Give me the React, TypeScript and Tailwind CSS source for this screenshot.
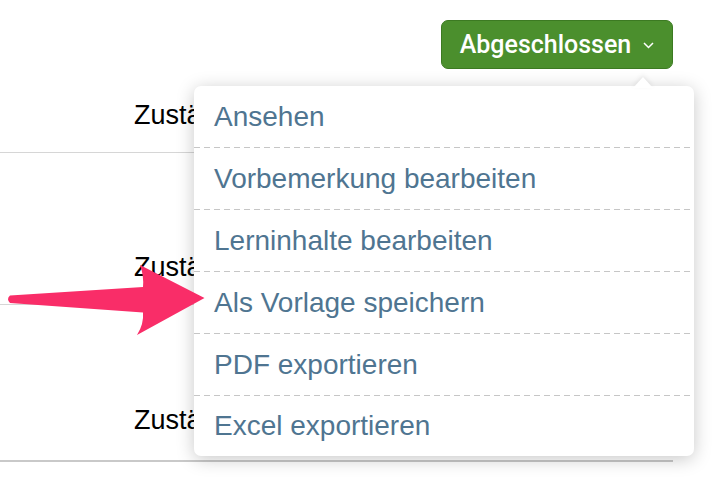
import { FC } from "react";

const items = [
    "Ansehen",
    "Vorbemerkung bearbeiten",
    "Lerninhalte bearbeiten",
    "Als Vorlage speichern",
    "PDF exportieren",
    "Excel exportieren",
];

const App: FC = () => {
    return (
        <div className="relative w-[724px] h-[480px] overflow-hidden bg-white font-['Liberation_Sans',Arial,sans-serif]">
            {/* Table rows behind the menu */}
            <div className="w-[673px]">
                <div className="h-[153px] pt-[100px] pl-[134px] border-b border-[#d6d6d6] text-[27px] leading-[31px] text-black">
                    <div className="w-[60px] overflow-hidden whitespace-nowrap">Zuständig</div>
                </div>
                <div className="h-[152px] pt-[99px] pl-[134px] border-b border-[#d6d6d6] text-[27px] leading-[31px] text-black">
                    <div className="w-[60px] overflow-hidden whitespace-nowrap">Zuständig</div>
                </div>
                <div className="h-[157px] pt-[100px] pl-[134px] border-b-2 border-[#c9c9c9] text-[27px] leading-[31px] text-black">
                    <div className="w-[60px] overflow-hidden whitespace-nowrap">Zuständig</div>
                </div>
            </div>

            {/* Status button */}
            <button className="absolute left-[441px] top-[20px] w-[232px] h-[49px] flex items-center justify-center gap-[12px] rounded-[7px] bg-[#4b8f2d] border border-[#3c7a22] text-white text-[25px] font-medium font-['Roboto',sans-serif]">
                <span>Abgeschlossen</span>
                <svg width="11" height="7" viewBox="0 0 11 7" className="mt-[2px]">
                    <polyline points="1,1 5.5,5.5 10,1" fill="none" stroke="white" strokeWidth="1.5" />
                </svg>
            </button>

            {/* Dropdown menu */}
            <div className="absolute left-[194px] top-[86px] w-[500px] rounded-[7px] bg-white shadow-[0_3px_18px_rgba(0,0,0,0.22)]">
                <svg
                    width="24"
                    height="12"
                    viewBox="0 0 24 12"
                    className="absolute left-[437px] -top-[10px] drop-shadow-[0_-2px_2px_rgba(0,0,0,0.08)]"
                >
                    <polygon points="2,12 12,1 22,12" fill="white" />
                </svg>
                {items.map((label, i) => (
                    <div key={label}>
                        <div
                            className={`flex items-center px-[20px] text-[28px] text-[#4f7591] ${i === items.length - 1 ? "h-[60px]" : "h-[61px]"}`}
                        >
                            {label}
                        </div>
                        {i < items.length - 1 && (
                            <div className="h-[1px] bg-[linear-gradient(to_right,#c6c6c6_6px,transparent_6px)] bg-[length:10px_1px]" />
                        )}
                    </div>
                ))}
            </div>

            {/* Pointer arrow */}
            <svg width="724" height="480" viewBox="0 0 724 480" className="absolute left-0 top-0 pointer-events-none">
                <path
                    d="M10,295.5 L143,287 Q144,276 140,265 L204.5,298 L137,335 Q144,324 143,312.5 L10,303 Q6,299.2 10,295.5 Z"
                    fill="#f92d68"
                />
            </svg>
        </div>
    );
};

export default App;
